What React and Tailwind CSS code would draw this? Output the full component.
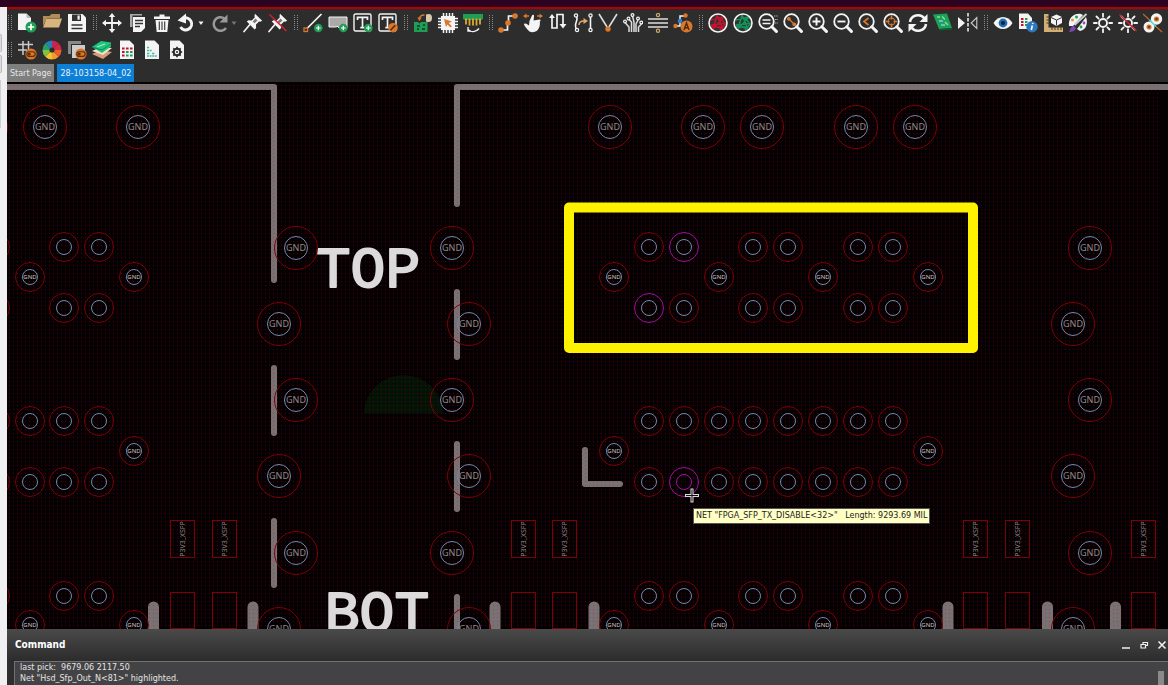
import React from "react";

const W = "#f4f4f4";
const O = "#d9772b";
const G = "#1f9d55";

const Badge = ({ x = 15, y = 15 }) => (
  <g>
    <circle cx={x} cy={y} r="4.3" fill={G} />
    <path d={`M${x - 2.3} ${y}h4.6M${x} ${y - 2.3}v4.6`} stroke="#fff" strokeWidth="1.2" />
  </g>
);
const Link = () => (
  <g>
    <circle cx="14" cy="14" r="5.6" fill={O} />
    <rect x="9.8" y="11.8" width="8.4" height="4.6" rx="2.3" fill="none" stroke="#5a2c08" strokeWidth="1.1" />
    <circle cx="12.2" cy="14.1" r="1.5" fill="#5a2c08" />
  </g>
);
const Sheet = () => <path d="M3 .5h9.500L17 5v14H3z" fill={W} />;
const Lens = ({ children }) => (
  <g>
    <circle cx="8.5" cy="8.5" r="7.3" fill="none" stroke={W} strokeWidth="1.8" />
    <path d="M13.8 13.8l4.6 4.6" stroke={W} strokeWidth="3" strokeLinecap="round" />
    {children}
  </g>
);
const Pin = () => (
  <g fill={W}>
    <path d="M12 .8l7.200 7-2 .9-1.200-.2-3 3.100.1 3.300-1.500 1.500-7.800-7.800L5.400 7.300l3.300.1 3-3-.2-1.600z" />
    <path d="M6.500 12L1 18.500" stroke={W} strokeWidth="1.7" strokeLinecap="round" />
    <path d="M12.500 5.500l2 2-3 2.700-1.800-1.800z" fill="#777" />
  </g>
);
const Sun = () => (
  <g stroke={W} fill="none">
    <circle cx="10" cy="10" r="4" strokeWidth="1.9" />
    <path d="M10 .8v3M10 16.200v3M.8 10h3M16.200 10h3M3.500 3.500l2.100 2.100M14.400 14.400l2.100 2.100M3.500 16.500l2.100-2.100M14.400 5.600l2.100-2.100" strokeWidth="1.800" strokeLinecap="round" />
  </g>
);
const Globe = ({ c }) => (
  <g fill="none">
    <circle cx="10" cy="10" r="9" fill="#333" />
    <path d="M2 7l14-3L5 16 9 2l6 14L3 12l15-2-6 7M3 14h12M8 3l8 6" stroke={c} strokeWidth="1.500" />
    <circle cx="10" cy="10" r="9" stroke={W} strokeWidth="1.600" />
  </g>
);
const TextBox = () => (
  <g>
    <rect x="1" y="1" width="17" height="17" rx="1.500" fill="none" stroke={W} strokeWidth="1.400" />
    <path d="M4.500 7V4.300h10V7M9.500 4.300v10.400M7.300 14.700h4.400" fill="none" stroke={W} strokeWidth="1.700" />
  </g>
);

const icons = {
  new: <g><path d="M1 .5h8.500L14 5v12H1z" fill={W} /><path d="M9.500.5V5H14" fill="#bbb" /><circle cx="14" cy="14" r="5.500" fill={G} /><path d="M14 10.800v6.400M10.800 14h6.400" stroke="#fff" strokeWidth="1.700" /></g>,
  open: <g><path d="M1 3h6.500l2-2H18v4H5L1 13z" fill="#b08d57" /><path d="M4.500 5.500H20l-3 9H1z" fill="#d8b57c" /></g>,
  save: <g><path d="M1 1h14.500L19 4.500V19H1z" fill={W} /><path d="M5 1.500h9V8H5z" fill="#333" /><path d="M10.500 2.500h2.200v4.200h-2.200z" fill={W} /><path d="M4.500 12h11M4.500 15.500h11" stroke="#333" strokeWidth="1.500" /></g>,
  move: <g><path d="M10 2v16M2 10h16" stroke={W} strokeWidth="1.800" /><path d="M10 0l3.200 4H6.800zM10 20l3.200-4H6.800zM0 10l4-3.200v6.400zM20 10l-4-3.200v6.400z" fill={W} /></g>,
  copy: <g><path d="M3 1h12v1.500H5.500V14H3z" fill="#aaa" /><path d="M6 4h12v11l-4 4H6z" fill={W} /><path d="M8 7.500h8M8 10.500h8M8 13.500h5" stroke="#333" strokeWidth="1.300" /></g>,
  trash: <g><path d="M2 3.500h5.500V1.500h5v2H18V6H2z" fill={W} /><path d="M3.500 7h13l-1.200 12H4.700z" fill={W} /><path d="M7.300 8.500v8.500M10 8.500v8.500M12.700 8.500v8.500" stroke="#333" strokeWidth="1.100" /></g>,
  undo: <g><path d="M6 5.500A6 6 0 1 1 3.500 14" fill="none" stroke={W} strokeWidth="3" /><path d="M.5 7.500L9 .5v10z" fill={W} /></g>,
  redo: <g><path d="M14.500 5.500A6.800 6.800 0 1 0 16 15" fill="none" stroke="#999" strokeWidth="2.500" /><path d="M17.500 1.500v8h-8z" fill="#999" /></g>,
  pin: <Pin />,
  unpin: <g><Pin /><path d="M1.500 1.500l17 16.500" stroke="#d0202e" strokeWidth="1.600" /></g>,
  line: <g><path d="M4 15.500L18.500 1" stroke={W} strokeWidth="1.700" /><rect x="1" y="15" width="3.500" height="3.500" fill="none" stroke={O} strokeWidth="1.300" /><Badge x={15.300} y={15} /></g>,
  rect: <g><path d="M1 4h18v11H11l-1-1.500-3 .5H1z" fill="#aaa" stroke={W} strokeWidth="1" /><Badge x={15.300} y={15} /></g>,
  text: <g><TextBox /><Badge x={15.300} y={15} /></g>,
  edit: <g><TextBox /><circle cx="15" cy="14.700" r="4.800" fill={O} /><path d="M12.500 17.300l4.800-5" stroke="#4a2a0c" strokeWidth="1.500" /></g>,
  place: <g><path d="M1 9h4l1.500 1.500L8 9h6.500v10H1z" fill={G} /><path d="M4 13h3M4 16h2M9 16h3M10 12h2" stroke="#053d20" strokeWidth="1.500" /><path d="M6.500 6c0-3 2-4 5-4" stroke={O} fill="none" strokeWidth="1.400" /><path d="M4.300 4.500h4.400L6.500 8z" fill={O} /><path d="M13 1.500c4-1.500 6 0 6 3.500s-2 5-6 3.500z" fill="#d8cba8" /></g>,
  chip: <g><path d="M5.500 0v20M8.500 0v20M11.500 0v20M14.500 0v20M0 5.500h20M0 8.500h20M0 11.500h20M0 14.500h20" stroke={W} strokeWidth="1.500" /><rect x="3" y="3" width="14" height="14" fill={W} /><path d="M6 6l8 2.600-3.200 1.500 3 3.200-1.200 1.200-3.200-3L8 14z" fill={O} /></g>,
  comb: <g><path d="M0 1h20v5l-2 1H2L0 6z" fill={G} /><path d="M3 5.500v6M6.500 5.500v7M10 5.500v7M13.500 5.500v7M17 5.500v6" stroke="#e0a72e" strokeWidth="1.800" /><path d="M5 16.500c3 3 8 3 11-1M5 14v4h3" fill="none" stroke={W} strokeWidth="1.400" /></g>,
  route: <g><path d="M3 17h6.500V9.500h1V3H17" fill="none" stroke={W} strokeWidth="1.700" /><circle cx="3" cy="17" r="2.800" fill={O} /><circle cx="10" cy="10" r="2.800" fill={O} /><circle cx="17" cy="3" r="2.800" fill={O} /></g>,
  hand: <g><path d="M6.500 18.500C4 16.500 1.500 13 1 11.500 1 10 3 10 4.500 11.500L6 12.500 6.500 8 9 2.500c.6-1.300 2.200-.8 2 .6L10.600 7.500l5.800-1c1.500 0 1.600 1.600.4 2C17.500 13 15.500 17.500 12.500 18.500 10.500 19.500 8 19.500 6.500 18.500z" fill={W} /><path d="M1 3h5M14 3h5" stroke={O} strokeWidth="1.300" /><path d="M3.500.500L0 3l3.500 2.500zM16.500.500L20 3l-3.500 2.500z" fill={O} /></g>,
  meander: <g><path d="M4 4v11h5V1.500h6V14" fill="none" stroke={W} strokeWidth="1.700" /><path d="M1 5L4 1l3 4zM11.500 11l3.500 4.500 3.500-4.500z" fill={W} /></g>,
  swap: <g><path d="M3 3c4 4-4 8 1 14M17.500 3v14" fill="none" stroke={W} strokeWidth="1.600" /><g fill="#2d2d2d" stroke={W} strokeWidth="1.300"><circle cx="3" cy="2.500" r="1.600" /><circle cx="4" cy="17" r="1.600" /><circle cx="17.500" cy="2.500" r="1.600" /><circle cx="17.500" cy="17" r="1.600" /></g><path d="M6 12c0-3 2-4 5-4" stroke="#e0a86a" fill="none" strokeWidth="1.500" /><path d="M10.500 5l4.500 3-4.500 3z" fill="#e0a86a" /></g>,
  vee: <g><path d="M1 1l9 14.500L19 1" fill="none" stroke="#ddd" strokeWidth="1.600" /><circle cx="10" cy="16" r="2.700" fill={O} /></g>,
  fanout: <g><path d="M6 19v-5L2 9.500M8.500 19V9L6 6.500M11 19V9L9.500 3M13 19v-8l2-4M15.500 19v-5l3-3" fill="none" stroke="#ddd" strokeWidth="1.500" /><g fill="#2d2d2d" stroke={W} strokeWidth="1.200"><circle cx="2" cy="8.500" r="1.400" /><circle cx="5.500" cy="5.500" r="1.400" /><circle cx="9.500" cy="2" r="1.400" /><circle cx="15" cy="5.500" r="1.400" /><circle cx="18.300" cy="9.500" r="1.400" /></g></g>,
  align: <g><path d="M0 6h20M0 10h20M0 14h20" stroke="#ddd" strokeWidth="1.700" /><circle cx="10" cy="2" r="1.600" fill="none" stroke="#d0a96a" strokeWidth="1.200" /><circle cx="10" cy="17.800" r="1.600" fill="none" stroke="#d0a96a" strokeWidth="1.200" /></g>,
  auto: <g><path d="M2 13h5V3h6" fill="none" stroke={W} strokeWidth="1.500" /><circle cx="2.500" cy="13" r="2.200" fill={O} /><circle cx="7" cy="8" r="2.300" fill="#2b83d8" /><circle cx="12.500" cy="2.500" r="2.200" fill={O} /><circle cx="13.500" cy="13.500" r="6" fill={O} /><path d="M11 17l2.500-7 2.500 7M12 14.700h3" fill="none" stroke="#4a2a0c" strokeWidth="1.400" /></g>,
  globeRed: <Globe c="#c4122c" />,
  globeGreen: <Globe c="#10945c" />,
  zoomFit: <Lens><path d="M4.500 7h8M4.500 10.500h8" stroke={W} strokeWidth="1.700" /><path d="M16 3h4M17 6.500h3M17 10h3" stroke="#aaa" strokeWidth="1.200" strokeDasharray="1.500 .8" /></Lens>,
  zoomPts: <Lens><path d="M5.500 5.500l6 6" stroke={O} strokeWidth="1.300" /><circle cx="5.800" cy="5.800" r="1.900" fill={O} /><circle cx="11.300" cy="11.300" r="1.900" fill={O} /></Lens>,
  zoomIn: <Lens><path d="M4.500 8.500h8M8.500 4.500v8" stroke={W} strokeWidth="1.900" /></Lens>,
  zoomOut: <Lens><path d="M4.500 8.500h8" stroke={W} strokeWidth="1.900" /></Lens>,
  zoomPrev: <Lens><path d="M10.500 5L6 8.500l4.500 3.500" fill="none" stroke={O} strokeWidth="1.700" /></Lens>,
  zoomCtr: <Lens><circle cx="8.500" cy="8.500" r="3.500" fill="none" stroke={O} strokeWidth="1" /><path d="M8.500 2.500v4M8.500 10.500v4M2.500 8.500h4M10.500 8.500h4" stroke={O} strokeWidth="1.500" /></Lens>,
  refresh: <g fill="none" stroke={W} strokeWidth="2.500"><path d="M2 9a8 7.500 0 0 1 14.500-3.500M18 11a8 7.500 0 0 1-14.500 3.500" /><path d="M19.500 1v8h-8zM.5 19v-8h8z" fill={W} stroke="none" /></g>,
  board: <g><path d="M0 1.500L14 .5l5 14.500-13 1z" fill="#1fa05a" /><path d="M6 16l13-1v1.500l-12.500 1z" fill="#0c5d32" /><path d="M4 4h3M9 3.500l3 3M6 8h4M12 9l3 3M8 12h4" stroke="#7be0a0" strokeWidth="1.500" /><circle cx="9.500" cy="10" r="1.200" fill="#2b83d8" /></g>,
  mirror: <g><path d="M0 4l7 6-7 6z" fill={W} /><path d="M18.800 4.500v11L13.200 10z" fill="none" stroke="#ccc" strokeWidth="1.100" /><path d="M10 0v20" stroke={W} strokeWidth="1.500" strokeDasharray="3.500 1.500" /></g>,
  eye: <g><path d="M.5 10C5 2 15 2 19.500 10 15 18 5 18 .5 10z" fill={W} /><circle cx="10" cy="10" r="4.400" fill="#1f6fb8" /><circle cx="10" cy="10" r="2" fill="#0d2236" /></g>,
  docInfo: <g><path d="M1 .5h9L14 5v11H1z" fill={W} /><path d="M3 6h2.500M3 9h2.500M3 12h2.500" stroke="#c4122c" strokeWidth="1.800" /><path d="M7 6h2.500M7 9h2.500M7 12h2" stroke={G} strokeWidth="1.800" /><circle cx="14" cy="13.700" r="5.700" fill="#2f78bf" /><path d="M14.300 12.500l-1 4.500M14.800 9.800l-.2 1.200" stroke="#fff" strokeWidth="1.600" /></g>,
  ruler: <g><path d="M1 1h4.500v13.500H20V19H1z" fill="#d2ae74" /><path d="M3.500 4H6M3.500 7H6M3.500 10H6M9 14v3M12 14v3M15 14v3M18 14v3" stroke="#4b3a1c" strokeWidth="1" /><path d="M8 4l5.500-2.500L19 4v6l-5.500 3L8 10z" fill={W} /><path d="M8 4.500L13.500 7 19 4.500M13.500 7v5.500" fill="none" stroke="#333" strokeWidth="1" /></g>,
  palette: <g><path d="M1 13C0 5 6 0 13 1l2 1L5 13zM9 16L18 4c2 5 1 13-6 14z" fill={W} /><circle cx="4.500" cy="7" r="1.500" fill="#d8a04c" /><circle cx="8.500" cy="4" r="1.500" fill={G} /><circle cx="16" cy="10" r="1.400" fill="#8a4fc0" /><circle cx="13" cy="14" r="1.400" fill={G} /><path d="M6.500 12L18.500 1" stroke="#ccc" strokeWidth="2" /><path d="M1 19c1.500-2 1-5 4.500-6.500L8 15c-1 3-4 4-7 4z" fill="#7d46b0" /></g>,
  sun: <Sun />,
  sunOff: <g><Sun /><path d="M1.500 1.500l17 16.500" stroke="#d0202e" strokeWidth="1.500" /></g>,
  clearance: <g><circle cx="13.500" cy="6" r="5.700" fill={W} /><circle cx="6" cy="14" r="5.500" fill={W} /><circle cx="13.500" cy="6" r="2" fill="#7b3f12" stroke={O} strokeWidth="1.200" /><circle cx="6" cy="14" r="2" fill="#7b3f12" stroke={O} strokeWidth="1.200" /><path d="M0 1l6.500 6M13 13.500l6 5.500" stroke="#c46a26" strokeWidth="1.200" /><path d="M6.500 7l6.500 6.500" stroke="#4fe0dd" strokeWidth="1.600" /></g>,
  grid: <g><path d="M6 1v14M11.500 1v9M1 4.500h15M1 10h9" stroke="#ccc" strokeWidth="1.500" /><Link /></g>,
  wheel: <g>{[["#2b7cc0", "M10 10V.5A9.500 9.500 0 0 0 3.300 3.300z"], ["#27a065", "M10 10L3.300 3.300A9.500 9.500 0 0 0 .5 10z"], ["#7fc242", "M10 10H.5a9.500 9.500 0 0 0 2.800 6.700z"], ["#f2c230", "M10 10l-6.700 6.700A9.500 9.500 0 0 0 10 19.500z"], ["#f29a2e", "M10 10v9.500a9.500 9.500 0 0 0 6.700-2.800z"], ["#e8602c", "M10 10l6.700 6.700A9.500 9.500 0 0 0 19.500 10z"], ["#d8273a", "M10 10h9.500a9.500 9.500 0 0 0-2.800-6.700z"], ["#c02850", "M10 10l6.700-6.700A9.500 9.500 0 0 0 10 .5z"]].map(([c, d]) => <path key={c} d={d} fill={c} />)}<circle cx="10" cy="10" r="2.600" fill="#2d2d2d" /></g>,
  shapes: <g><path d="M1 1h13v3H4v10H1z" fill="#888" /><path d="M5 5h13v13H5z" fill="#ccc" /><Link /></g>,
  layers: <g><path d="M0 14l9-4 11 2-9 7z" fill="#d99a76" /><path d="M0 11l9-4 11 1-9 7z" fill="#efe4d2" /><path d="M0 7l9-6 10 1.500v4L10 13z" fill="#1fc47d" /><path d="M0 7l10 3 9-6" fill="none" stroke="#0d8a52" /><path d="M5 7l8-3" stroke="#9af0c4" strokeWidth="1.300" /></g>,
  table: <g><Sheet /><path d="M5 8.500h2.600M9 8.500h2.600M13 8.500h2.600M5 12h2.600M5 15.500h2.600" stroke="#c4122c" strokeWidth="2.200" /><path d="M9 12h2.600M13 12h2.600M9 15.500h2.600M13 15.500h2.600" stroke={G} strokeWidth="2.200" /></g>,
  list: <g><Sheet /><path d="M5 7.500h2M5 10.500h5M5 13.500h3M5 16h10M10 13.500h3" stroke="#45b8a4" strokeWidth="1.500" strokeDasharray="2 .6" /></g>,
  config: <g><Sheet /><circle cx="10" cy="12" r="3.300" fill="none" stroke="#2b2b2b" strokeWidth="2" /><path d="M10 6.800v2M10 15.200v2M4.800 12h2M13.200 12h2M6.300 8.300l1.400 1.400M12.300 14.300l1.400 1.400M6.300 15.700l1.400-1.400M12.300 9.700l1.400-1.400" stroke="#2b2b2b" strokeWidth="1.700" /><circle cx="10" cy="12" r="1" fill="#2b2b2b" /></g>,
};

const topBar = [
  [["new", "New"], ["open", "Open"], ["save", "Save"]],
  [["move", "Move"], ["copy", "Copy"], ["trash", "Delete"], ["undo", "Undo", 1], ["redo", "Redo", 1], ["pin", "Fix"], ["unpin", "Unfix"]],
  [["line", "Add line"], ["rect", "Add rectangle"], ["text", "Add text"], ["edit", "Edit text"]],
  [["place", "Place part"], ["chip", "Select part"], ["comb", "Swap pins"]],
  [["route", "Route"], ["hand", "Slide"], ["meander", "Delay tune"], ["swap", "Custom smooth"], ["vee", "Vertex"], ["fanout", "Fanout"], ["align", "Spread"], ["auto", "Auto route"]],
  [["globeRed", "Rats off"], ["globeGreen", "Rats on"], ["zoomFit", "Zoom fit"], ["zoomPts", "Zoom points"], ["zoomIn", "Zoom in"], ["zoomOut", "Zoom out"], ["zoomPrev", "Zoom previous"], ["zoomCtr", "Zoom center"], ["refresh", "Redraw"], ["board", "3D view"], ["mirror", "Flip board"]],
  [["eye", "Visibility"], ["docInfo", "Report"], ["ruler", "Measure"], ["palette", "Colors"], ["sun", "Highlight"], ["sunOff", "Dehighlight"], ["clearance", "Clearance"]],
];
const lowerBar = [[["grid", "Grid"], ["wheel", "Color wheel"], ["shapes", "Shapes"], ["layers", "Layers"], ["table", "Constraints"], ["list", "Status"], ["config", "Setup"]]];

function Tool({ name, label, menu }) {
  return (
    <div className="flex flex-none items-center">
      <button aria-label={label} className="h-5 w-5">
        <svg viewBox="0 0 20 20" className="h-5 w-5">{icons[name]}</svg>
      </button>
      {menu && (
        <button aria-label={`${label} history`} className="h-5 w-2">
          <svg viewBox="0 0 8 20" className="h-5 w-2"><path d="M1.500 8.500h5L4 12z" fill={name === "undo" ? W : "#777"} /></svg>
        </button>
      )}
    </div>
  );
}

function Bar({ groups }) {
  return (
    <div className="flex h-5 items-center gap-[5px]">
      {groups.map((group, i) => (
        <React.Fragment key={i}>
          <svg viewBox="0 0 5 16" className="h-4 w-[5px] flex-none">
            <path d="M1.500 0v16M4.500 0v16" stroke="#8a8a8a" strokeWidth="1" strokeDasharray="1 1" />
          </svg>
          {group.map(([name, label, menu]) => <Tool key={name} name={name} label={label} menu={menu} />)}
        </React.Fragment>
      ))}
    </div>
  );
}

const bigVias = [
  ...[-14, 45, 138, 610, 703, 762, 856, 915].map((x) => [x, 127]),
  ...[248, 400, 553].flatMap((y) => [296, 452, 1090].map((x) => [x, y])),
  ...[324, 476, 629].flatMap((y) => [279, 469, 1073].map((x) => [x, y])),
];
const pairs = [-5, 64, 99, 649, 684, 753, 788, 858, 893];
const full = [-5, 30, 64, 99, 649, 684, 719, 753, 788, 823, 858, 893];
const pins = [
  ...[247, 308, 596].flatMap((y) => pairs.map((x) => [x, y])),
  ...[421, 482].flatMap((y) => full.map((x) => [x, y])),
];
const gndPins = [
  ...[277, 625].flatMap((y) => [30, 134, 614, 719, 823, 928].map((x) => [x, y])),
  ...[134, 614, 928].map((x) => [x, 451]),
];
const pads = [170, 212, 511, 552, 963, 1005, 1131];
const highlighted = ["684,247", "649,308", "684,482"];
const RED = "#7c0008";
const BLUE = "#7389ad";
const PURPLE = "#a010a0";

function Board() {
  return (
    <svg className="absolute inset-0 h-full w-full" role="img" aria-label="Board layout" fontFamily="'Noto Sans', sans-serif" textAnchor="middle">
      <defs>
        <pattern id="dots" width="4" height="4" patternUnits="userSpaceOnUse">
          <rect width="1" height="1" x="1" y="1" fill="#d00020" fillOpacity="0.36" />
        </pattern>
      </defs>
      <g transform="translate(-7 -82)" fill="none">
        <path d="M364 413.500a39.500 38.500 0 0 1 79 0z" fill="#021204" />
        <g stroke="#787274" strokeWidth="6" strokeLinecap="round" strokeLinejoin="round">
          <path d="M-10 87H274V280M457 204V87H4000M457 292V357M457 444V509M457 597V700M274 368V433M274 521V585M585 450V484H620" />
          <path d="M153.500 607V700M253 607V700M495 607V700M594 607V700M948 607V700M1047.500 607V700M1115.500 607V700" strokeWidth="11" />
        </g>
        <rect x="0" y="82" width="100%" height="100%" fill="url(#dots)" />
        <g fill="#dcdadb" stroke="#dcdadb" strokeWidth="2" strokeLinejoin="round" fontFamily="'Liberation Sans Narrow', 'Liberation Mono', monospace" fontSize="58">
          <text x="368" y="287">TOP</text>
          <text x="377" y="631">BOT</text>
        </g>
        {bigVias.map(([x, y]) => (
          <g key={`${x},${y}`}>
            <circle cx={x} cy={y} r="21.500" stroke={RED} />
            <circle cx={x} cy={y} r="11.500" stroke={BLUE} />
            {x > 0 && <text x={x} y={y + 3} fontSize="9" fill="#8f8a8a">GND</text>}
          </g>
        ))}
        {pins.map(([x, y]) => {
          const hot = highlighted.includes(`${x},${y}`);
          return (
            <g key={`${x},${y}`}>
              <circle cx={x} cy={y} r="14.500" stroke={hot ? PURPLE : RED} />
              <circle cx={x} cy={y} r="7.500" stroke={hot && y === 482 ? PURPLE : BLUE} />
            </g>
          );
        })}
        {gndPins.map(([x, y]) => (
          <g key={`${x},${y}`}>
            <circle cx={x} cy={y} r="14.500" stroke={RED} />
            <circle cx={x} cy={y} r="7.500" stroke={BLUE} />
            <text x={x} y={y + 2} fontSize="6" fill="#c8c4c4">GND</text>
          </g>
        ))}
        {pads.map((x) => (
          <g key={x}>
            <rect x={x + 0.5} y="520.500" width="24" height="37" stroke={RED} />
            <rect x={x + 0.5} y="592.500" width="24" height="36" stroke={RED} />
            <text transform={`translate(${x + 15} 539) rotate(-90)`} fontSize="7" fill="#8a8585">P3V3_XSFP</text>
          </g>
        ))}
        <rect x="569" y="207.500" width="404" height="140.500" stroke="#fff200" strokeWidth="10" strokeLinejoin="round" />
        <path d="M692 488.500v14M685 495.500h14" stroke="#d8d8d8" strokeWidth="3" />
        <path d="M692 489.500v12M686 495.500h12" stroke="#111" strokeWidth="1" />
      </g>
    </svg>
  );
}

export default function App() {
  return (
    <div className="flex h-screen flex-col overflow-hidden bg-[#2d2d2d] font-['DejaVu_Sans',sans-serif] text-white">
      <div className="h-[7px] flex-none bg-[#2d0322]" />
      <div className="flex min-h-0 flex-1">
        <div className="flex w-[7px] flex-none flex-col items-start gap-[3px] bg-[#f0eff1] pt-[27px]">
          <div className="h-[18px] w-0.5 rounded-r border border-l-0 border-[#b9b8ba] bg-[#dddcde]" />
          <div className="h-[18px] w-0.5 rounded-r border border-l-0 border-[#b9b8ba] bg-[#dddcde]" />
          <div className="mt-1 h-12 w-px bg-[#cfced0]" />
        </div>
        <div className="flex min-w-0 flex-1 flex-col">
          <header className="flex-none border-t-2 border-[#b30000]">
            <div className="flex flex-col gap-[7px] overflow-hidden pt-1">
              <Bar groups={topBar} />
              <Bar groups={lowerBar} />
            </div>
            <nav className="mt-1 flex h-[18px] gap-[3px] text-[8px] leading-[17px]">
              <button className="bg-[#7f7f7f] px-[3px] text-[#e6e6e6]">Start Page</button>
              <button className="bg-[#0d7fd4] px-[3px] text-[#e6f2ff]">28-103158-04_02</button>
            </nav>
          </header>
          <main className="relative min-h-0 flex-1 overflow-hidden bg-[#050001]">
            <Board />
            <div className="absolute left-[686px] top-[426px] whitespace-pre border border-[#555] bg-[#ffffc4] px-[2px] text-[8px] leading-[14px] text-[#222]">
              {'NET "FPGA_SFP_TX_DISABLE<32>"   Length: 9293.69 MIL'}
            </div>
          </main>
          <section className="flex-none bg-[#2e2e2e]">
            <div className="flex h-8 items-center justify-between bg-linear-to-b from-[#4a4a4b] to-[#2c2c2c] pl-2 pr-px">
              <h2 className="font-['DejaVu_Sans_Condensed','DejaVu_Sans',sans-serif] text-[10px] font-bold leading-4">Command</h2>
              <div className="flex gap-2">
                <button aria-label="Minimize"><svg viewBox="0 0 10 10" className="h-2.5 w-2.5"><path d="M1 8h8" stroke="#eee" strokeWidth="1.500" /></svg></button>
                <button aria-label="Restore"><svg viewBox="0 0 10 10" className="h-2.5 w-2.5"><path d="M4 4V2.500h4.500v3H7M2 4.500h4.500v3.500H2z" fill="none" stroke="#eee" strokeWidth="1.200" /></svg></button>
                <button aria-label="Close"><svg viewBox="0 0 10 10" className="h-2.5 w-2.5"><path d="M1.500 1.500l7 7M8.500 1.500l-7 7" stroke="#eee" strokeWidth="1.600" /></svg></button>
              </div>
            </div>
            <div className="ml-[7px] flex h-6 justify-between border-l border-t border-[#727274] bg-[#434345] pl-[5px] pr-1">
              <div className="whitespace-pre text-[8px] leading-[11px] text-[#e4e4e4]">
                <p>{"last pick:  9679.06 2117.50"}</p>
                <p>{'Net "Hsd_Sfp_Out_N<81>" highlighted.'}</p>
              </div>
              <div className="mt-[9px] w-1.5 bg-[#8a8a8a]" />
            </div>
          </section>
        </div>
      </div>
    </div>
  );
}
